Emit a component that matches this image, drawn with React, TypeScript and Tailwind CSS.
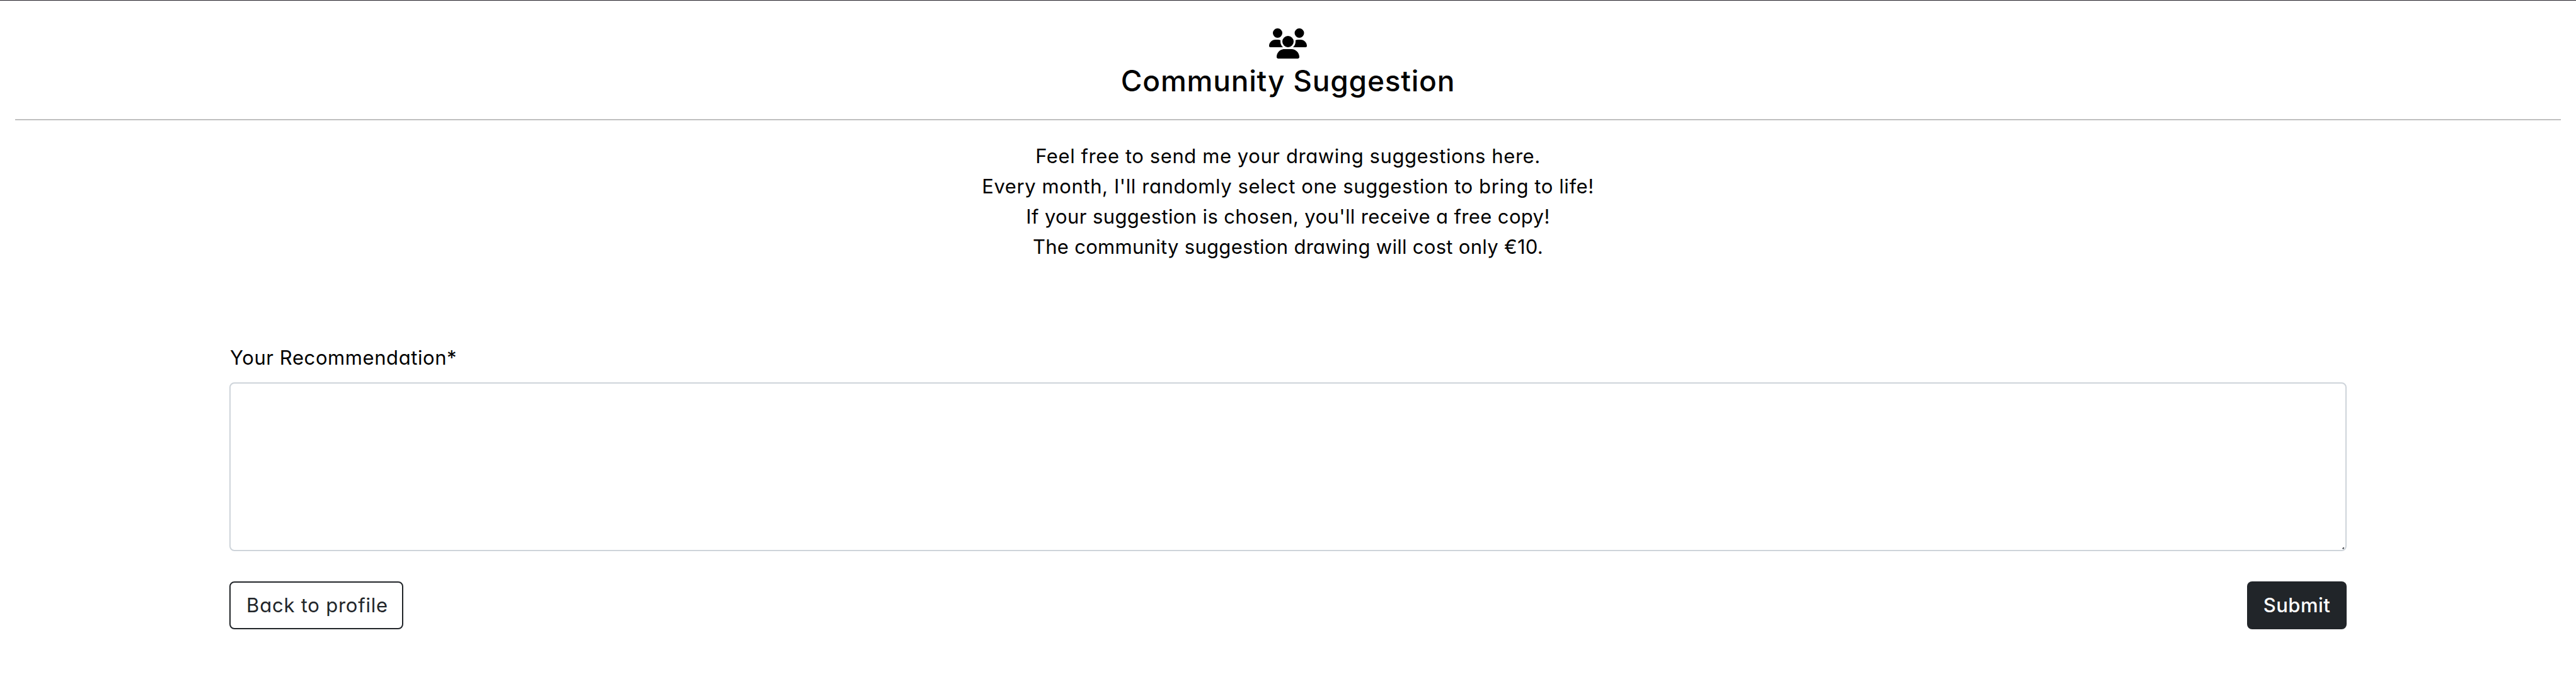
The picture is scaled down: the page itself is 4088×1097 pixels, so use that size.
import { FaUsers } from "react-icons/fa6";

export default function App() {
  return (
    <div className="min-h-screen border-t border-[#231f28] bg-white font-['Inter',sans-serif] text-[31px] leading-[48px] text-black [font-feature-settings:'cv11']">
      <header className="mx-6 flex flex-col items-center border-b-2 border-[#bfbfbf] pt-11 pb-8">
        <FaUsers className="h-12 w-[60px]" />
        <h1 className="mt-1.5 text-[46px] leading-[58px] font-medium tracking-[0.8px]">Community Suggestion</h1>
      </header>

      <main>
        <div className="pt-[33px] text-center">
          <p className="tracking-[0.58px]">Feel free to send me your drawing suggestions here.</p>
          <p className="tracking-[0.59px]">Every month, I'll randomly select one suggestion to bring to life!</p>
          <p className="tracking-[0.38px]">If your suggestion is chosen, you'll receive a free copy!</p>
          <p className="tracking-[0.29px]">The community suggestion drawing will cost only €10.</p>
        </div>

        <form className="mx-[364px] mt-32" onSubmit={(e) => e.preventDefault()}>
          <label htmlFor="recommendation" className="ml-px block tracking-[0.58px]">
            Your Recommendation*
          </label>
          <div className="relative mt-[15px]">
            <textarea
              id="recommendation"
              className="block h-[268px] w-full resize-none rounded-lg border-2 border-[#ced4da] bg-white px-6 py-3 outline-none"
            />
            <svg className="pointer-events-none absolute right-1 bottom-[3px] size-[3px]" viewBox="0 0 3 3">
              <path d="M1 0h2v2H2v1H1V2H0V1h1z" fill="#55565a" />
            </svg>
          </div>
          <div className="mt-12 flex justify-between">
            <button
              type="button"
              className="h-[76px] w-[276px] rounded-lg border-2 border-[#212529] pl-[3px] tracking-[0.78px] text-[#212529]"
            >
              Back to profile
            </button>
            <button
              type="submit"
              className="h-[76px] w-[158px] rounded-lg bg-[#212529] font-medium tracking-[0.5px] text-white"
            >
              Submit
            </button>
          </div>
        </form>
      </main>
    </div>
  );
}
